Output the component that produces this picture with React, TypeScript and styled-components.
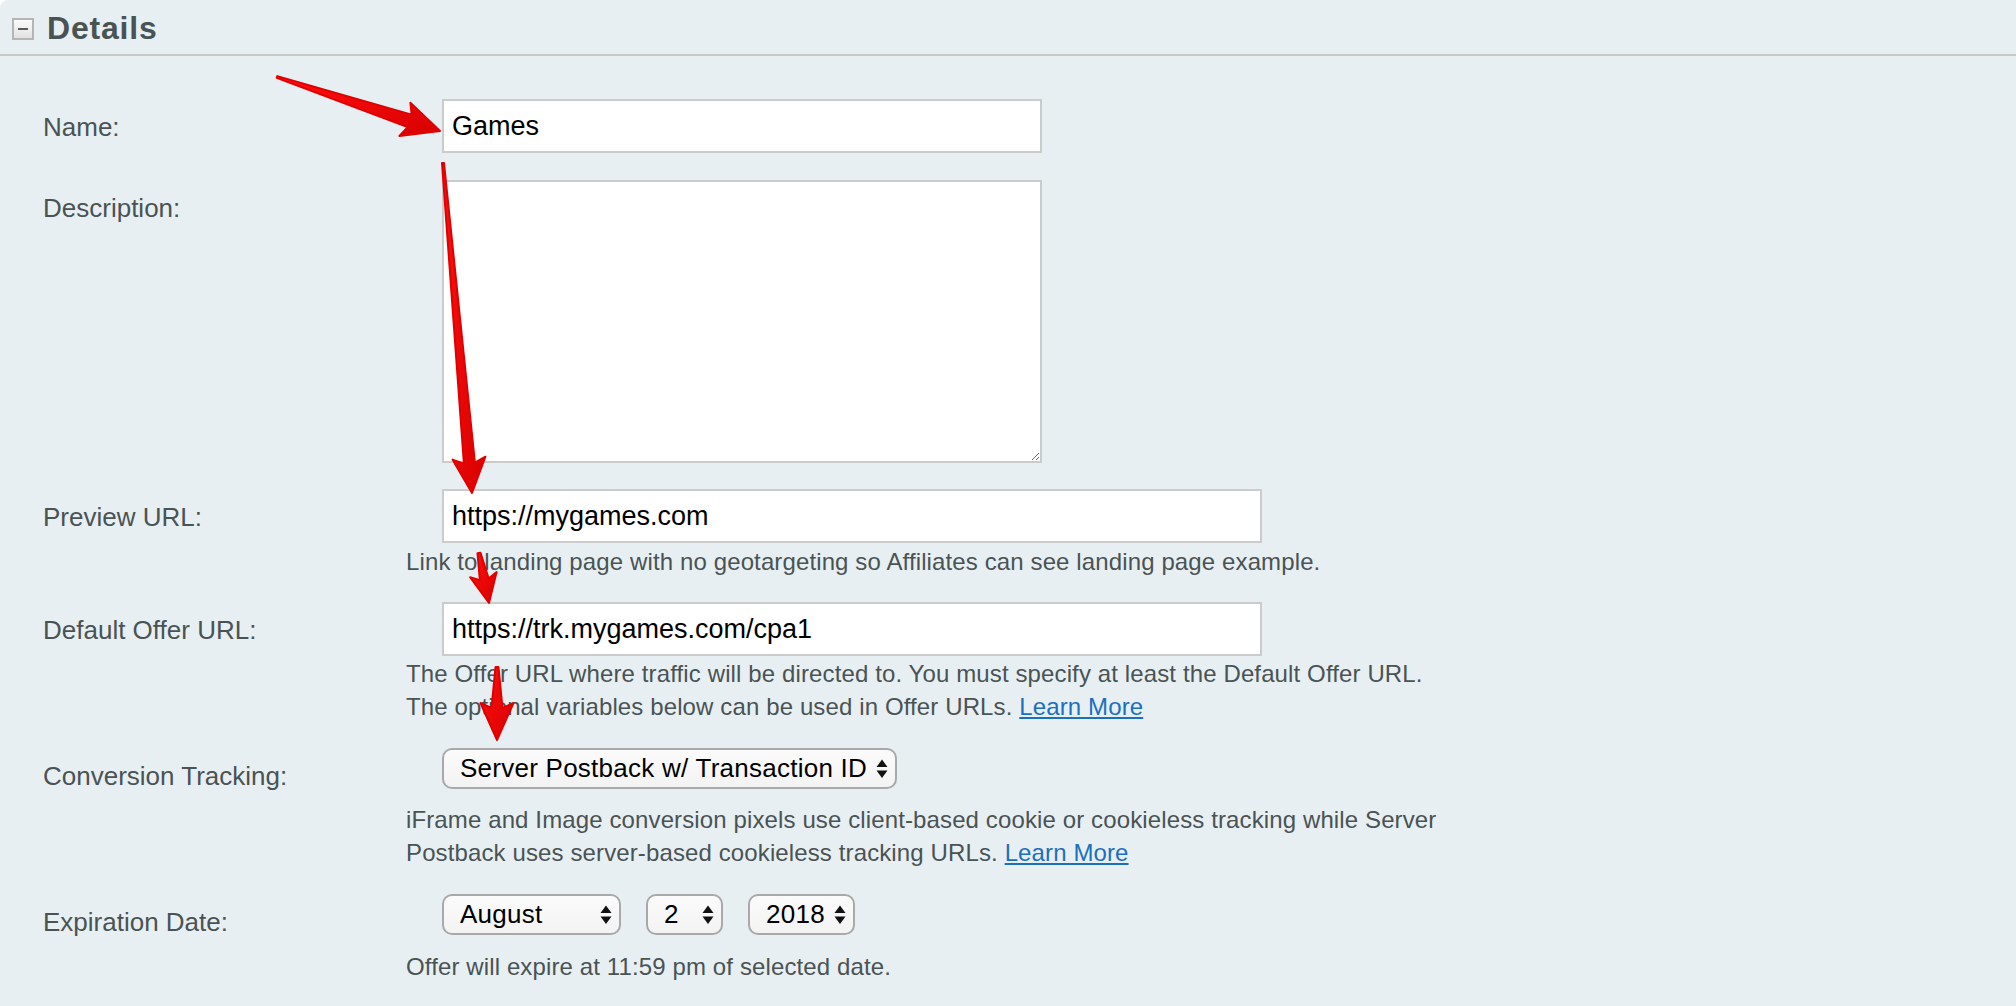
import styled, { createGlobalStyle } from "styled-components";

const GlobalStyle = createGlobalStyle`
  html, body {
    margin: 0;
    padding: 0;
    background: #ffffff;
  }
  body {
    font-family: "Liberation Sans", Arial, sans-serif;
  }
`;

const Page = styled.div`
  position: relative;
  width: 2016px;
  height: 1006px;
  overflow: hidden;
  background: #e8eff3;
  border-top-left-radius: 8px;
  color: #4a5354;
`;

const Header = styled.div`
  height: 54px;
  display: flex;
  align-items: center;
  gap: 13px;
  padding-left: 12px;
  border-bottom: 2px solid #c9c9c9;
`;

const Toggle = styled.div`
  width: 22px;
  height: 22px;
  box-sizing: border-box;
  margin-top: 4px;
  border: 2px solid #b5b5b5;
  background: linear-gradient(#fbfbfb, #e2e2e2);
  display: flex;
  align-items: center;
  justify-content: center;

  &::after {
    content: "";
    width: 10px;
    height: 2px;
    background: #5a5a5a;
  }
`;

const Title = styled.div`
  margin-top: 3px;
  font-size: 32px;
  font-weight: bold;
  letter-spacing: 0.8px;
  color: #4a5354;
`;

const Form = styled.div`
  display: flex;
  flex-direction: column;
`;

const Row = styled.div<{ $gap: number }>`
  display: grid;
  grid-template-columns: 406px 1fr;
  margin-top: ${(p) => p.$gap}px;
`;

const Label = styled.div`
  padding-left: 43px;
  height: 54px;
  line-height: 56px;
  font-size: 26px;
  color: #4a5354;
  white-space: nowrap;
`;

const Field = styled.div`
  display: flex;
  flex-direction: column;
  align-items: flex-start;
`;

const TextInput = styled.input<{ $width: number }>`
  box-sizing: border-box;
  width: ${(p) => p.$width}px;
  height: 54px;
  margin: 0 0 0 36px;
  padding: 0 8px;
  border: 2px solid #cbcbcb;
  border-radius: 0;
  background: #ffffff;
  font: 27px "Liberation Sans", Arial, sans-serif;
  color: #000000;
  outline: none;
`;

const TextArea = styled.textarea`
  display: block;
  box-sizing: border-box;
  width: 600px;
  height: 283px;
  margin: 0 0 0 36px;
  padding: 8px;
  border: 2px solid #cbcbcb;
  border-radius: 0;
  background: #ffffff;
  font: 27px "Liberation Sans", Arial, sans-serif;
  resize: both;
  outline: none;
`;

const Help = styled.div<{ $top: number }>`
  margin-top: ${(p) => p.$top}px;
  font-size: 24px;
  line-height: 33px;
  letter-spacing: 0.12px;
  color: #4a5354;
  white-space: nowrap;
`;

const Link = styled.a`
  color: #1b6fc0;
  text-decoration: underline;
  cursor: pointer;
`;

const SelectGroup = styled.div`
  height: 54px;
  display: flex;
  align-items: flex-start;
  gap: 25px;
  margin-left: 36px;
`;

const Select = styled.div<{ $width: number }>`
  box-sizing: border-box;
  width: ${(p) => p.$width}px;
  height: 41px;
  display: flex;
  align-items: center;
  padding: 0 7px 0 16px;
  border: 2px solid #a9a9a9;
  border-radius: 10px;
  background: linear-gradient(#fbfbfb, #f3f3f3);
  font-size: 26px;
  letter-spacing: 0.25px;
  color: #000000;
`;

const SelectValue = styled.span`
  flex: 1;
  white-space: nowrap;
`;

const Overlay = styled.svg`
  position: absolute;
  left: 0;
  top: 0;
  pointer-events: none;
`;

function SelectArrows() {
  return (
    <svg width="12" height="20" viewBox="0 0 12 20">
      <polygon points="0.5,8 6,0.5 11.5,8" fill="#111" />
      <polygon points="0.5,11.5 6,19 11.5,11.5" fill="#111" />
    </svg>
  );
}

function Dropdown({ value, width }: { value: string; width: number }) {
  return (
    <Select $width={width}>
      <SelectValue>{value}</SelectValue>
      <SelectArrows />
    </Select>
  );
}

type Arrow = {
  tx: number;
  ty: number;
  px: number;
  py: number;
  tail: number;
  shaft: number;
  head: number;
  len: number;
};

const arrows: Arrow[] = [
  { tx: 277, ty: 77, px: 440, py: 131, tail: 2, shaft: 13, head: 35, len: 32 },
  { tx: 443, ty: 163, px: 472, py: 493, tail: 2, shaft: 11, head: 33, len: 30 },
  { tx: 479, ty: 553, px: 489, py: 603, tail: 3, shaft: 9, head: 27, len: 24 },
  { tx: 497, ty: 667, px: 497, py: 740, tail: 3, shaft: 11, head: 33, len: 32 },
];

function arrowPoints(a: Arrow) {
  const dx = a.px - a.tx;
  const dy = a.py - a.ty;
  const d = Math.hypot(dx, dy);
  const ux = dx / d;
  const uy = dy / d;
  const nx = -uy;
  const ny = ux;
  const bx = a.px - ux * a.len;
  const by = a.py - uy * a.len;
  const sweep = 5;
  const pts = [
    [a.tx + (nx * a.tail) / 2, a.ty + (ny * a.tail) / 2],
    [bx + (nx * a.shaft) / 2, by + (ny * a.shaft) / 2],
    [bx - ux * sweep + (nx * a.head) / 2, by - uy * sweep + (ny * a.head) / 2],
    [a.px, a.py],
    [bx - ux * sweep - (nx * a.head) / 2, by - uy * sweep - (ny * a.head) / 2],
    [bx - (nx * a.shaft) / 2, by - (ny * a.shaft) / 2],
    [a.tx - (nx * a.tail) / 2, a.ty - (ny * a.tail) / 2],
  ];
  return pts.map(([x, y]) => `${x.toFixed(1)},${y.toFixed(1)}`).join(" ");
}

export default function App() {
  return (
    <>
      <GlobalStyle />
      <Page>
        <Header>
          <Toggle />
          <Title>Details</Title>
        </Header>

        <Form>
          <Row $gap={43}>
            <Label>Name:</Label>
            <Field>
              <TextInput $width={600} defaultValue="Games" />
            </Field>
          </Row>

          <Row $gap={27}>
            <Label>Description:</Label>
            <Field>
              <TextArea defaultValue="" />
            </Field>
          </Row>

          <Row $gap={26}>
            <Label>Preview URL:</Label>
            <Field>
              <TextInput $width={820} defaultValue="https://mygames.com" />
              <Help $top={2}>
                Link to landing page with no geotargeting so Affiliates can see landing page example.
              </Help>
            </Field>
          </Row>

          <Row $gap={24}>
            <Label>Default Offer URL:</Label>
            <Field>
              <TextInput $width={820} defaultValue="https://trk.mygames.com/cpa1" />
              <Help $top={1}>
                The Offer URL where traffic will be directed to. You must specify at least the Default Offer URL.
                <br />
                The optional variables below can be used in Offer URLs. <Link>Learn More</Link>
              </Help>
            </Field>
          </Row>

          <Row $gap={25}>
            <Label>Conversion Tracking:</Label>
            <Field>
              <SelectGroup>
                <Dropdown value="Server Postback w/ Transaction ID" width={455} />
              </SelectGroup>
              <Help $top={1}>
                iFrame and Image conversion pixels use client-based cookie or cookieless tracking while Server
                <br />
                Postback uses server-based cookieless tracking URLs. <Link>Learn More</Link>
              </Help>
            </Field>
          </Row>

          <Row $gap={25}>
            <Label>Expiration Date:</Label>
            <Field>
              <SelectGroup>
                <Dropdown value="August" width={179} />
                <Dropdown value="2" width={77} />
                <Dropdown value="2018" width={107} />
              </SelectGroup>
              <Help $top={2}>Offer will expire at 11:59 pm of selected date.</Help>
            </Field>
          </Row>
        </Form>

        <Overlay width="2016" height="1006" viewBox="0 0 2016 1006">
          <defs>
            <linearGradient id="arrowFill" x1="0" y1="0" x2="1" y2="1">
              <stop offset="0" stopColor="#ff1010" />
              <stop offset="1" stopColor="#d80000" />
            </linearGradient>
          </defs>
          {arrows.map((a, i) => (
            <polygon
              key={i}
              points={arrowPoints(a)}
              fill="url(#arrowFill)"
              stroke="#e00000"
              strokeWidth={2}
              strokeLinejoin="round"
            />
          ))}
        </Overlay>
      </Page>
    </>
  );
}
